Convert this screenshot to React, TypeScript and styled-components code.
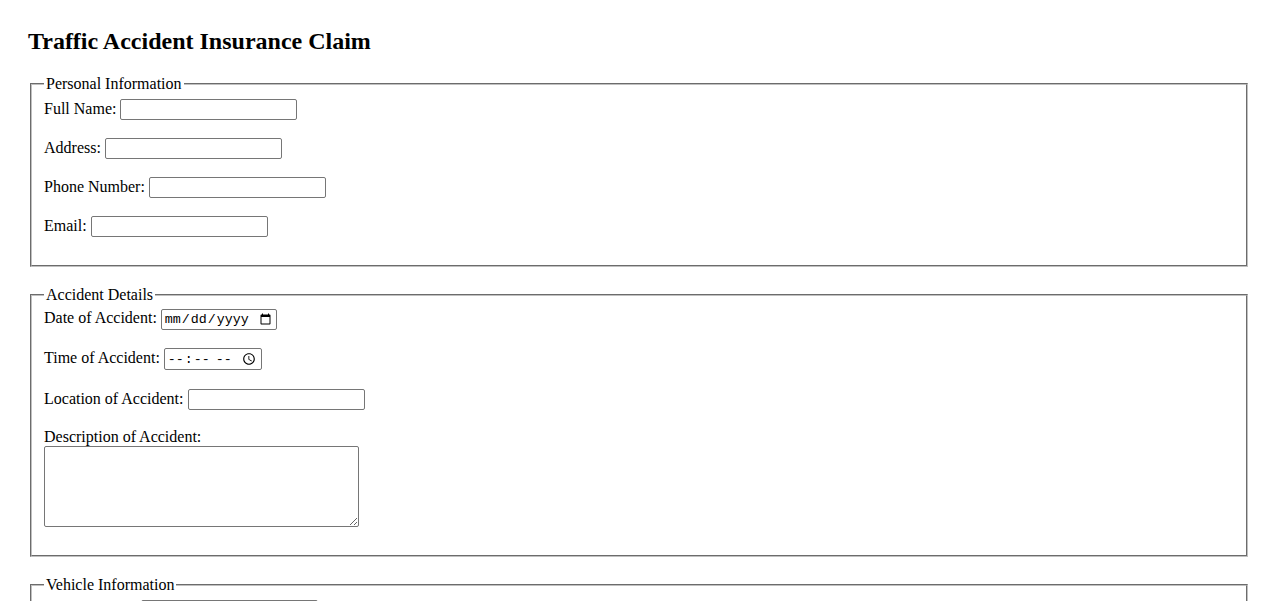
import React from "react";
import styled, { createGlobalStyle } from "styled-components";

const GlobalStyle = createGlobalStyle`
  body {
    margin: 8px;
    background: #ffffff;
    color: #000000;
    font-family: "Liberation Serif", "Times New Roman", serif;
    font-size: 16px;
  }
`;

const Page = styled.div`
  padding: 20px;
`;

const Title = styled.h2`
  font-size: 24px;
  font-weight: bold;
  margin: 0 0 20px;
`;

const Section = styled.fieldset`
  margin: 0 2px 19px;
  padding: 5.6px 12px 10px;
  border: 2px groove rgb(192, 192, 192);
  min-inline-size: min-content;
`;

const Legend = styled.legend`
  padding: 0 2px;
`;

const Field = styled.div<{ $gap?: number }>`
  margin-bottom: ${(p) => p.$gap ?? 18}px;
`;

const BlockLabel = styled.label`
  display: block;
`;

const TextInput = styled.input`
  font-family: "Liberation Sans", Arial, sans-serif;
  font-size: 13.333px;
  width: 177px;
  height: 21px;
  box-sizing: border-box;
  padding: 1px 2px;
  border: 1px solid #767676;
  border-radius: 2px;
`;

const PickerInput = styled.input<{ $w: number; $h: number }>`
  font-family: "Liberation Mono", "Courier New", monospace;
  font-size: 13.333px;
  width: ${(p) => p.$w}px;
  height: ${(p) => p.$h}px;
  box-sizing: border-box;
  padding: 1px 2px;
  border: 1px solid #767676;
  border-radius: 2px;
`;

const TextArea = styled.textarea`
  display: block;
  margin: 0;
  width: 315px;
  height: 81px;
  box-sizing: border-box;
  font-family: "Liberation Mono", monospace;
  font-size: 13.333px;
  border: 1px solid #767676;
  border-radius: 2px;
`;

function Row({ label, id, type = "text" }: { label: string; id: string; type?: string }) {
  return (
    <Field>
      <label htmlFor={id}>{label}:</label> <TextInput id={id} type={type} />
    </Field>
  );
}

export default function App() {
  return (
    <Page>
      <GlobalStyle />
      <Title>Traffic Accident Insurance Claim</Title>
      <form>
        <Section>
          <Legend>Personal Information</Legend>
          <Row label="Full Name" id="name" />
          <Row label="Address" id="address" />
          <Row label="Phone Number" id="phone" type="tel" />
          <Row label="Email" id="email" type="email" />
        </Section>

        <Section>
          <Legend>Accident Details</Legend>
          <Field>
            <label htmlFor="date">Date of Accident:</label>{" "}
            <PickerInput id="date" type="date" $w={116} $h={21} />
          </Field>
          <Field $gap={19}>
            <label htmlFor="time">Time of Accident:</label>{" "}
            <PickerInput id="time" type="time" $w={98} $h={22} />
          </Field>
          <Row label="Location of Accident" id="location" />
          <Field>
            <BlockLabel htmlFor="description">Description of Accident:</BlockLabel>
            <TextArea id="description" />
          </Field>
        </Section>

        <Section>
          <Legend>Vehicle Information</Legend>
          <Row label="Vehicle Make" id="make" />
          <Row label="Vehicle Model" id="model" />
          <Row label="Vehicle Year" id="year" />
          <Row label="License Plate" id="plate" />
        </Section>
      </form>
    </Page>
  );
}
